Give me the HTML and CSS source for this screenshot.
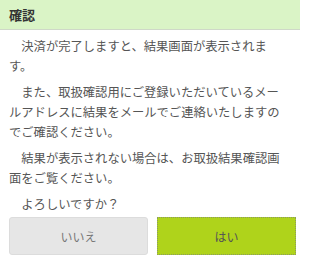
FILE: index.html
```html
<!DOCTYPE html>
<html lang="ja">
<head>
<meta charset="utf-8">
<link rel="stylesheet" href="styles.css">
</head>
<body>
<div class="dialog">
  <div class="dialog-header">確認</div>
  <div class="dialog-body">
    <p class="msg">決済が完了しますと、結果画面が表示されます。</p>
    <p class="msg">また、取扱確認用にご登録いただいているメールアドレスに結果をメールでご連絡いたしますのでご確認ください。</p>
    <p class="msg">結果が表示されない場合は、お取扱結果確認画面をご覧ください。</p>
    <p class="msg last">よろしいですか？</p>
  </div>
  <div class="dialog-actions">
    <button class="btn btn-no">いいえ</button>
    <button class="btn btn-yes">はい</button>
  </div>
</div>
</body>
</html>
```

FILE: styles.css
```css
html, body {
  margin: 0;
  padding: 0;
  background: #ffffff;
}
body {
  font-family: "Noto Sans CJK JP", "Noto Sans", sans-serif;
  color: #555555;
}
.dialog {
  width: 300px;
}
.dialog-header {
  height: 29px;
  line-height: 29px;
  background: #daf4c6;
  border-bottom: 1px solid #cfd8c8;
  padding-left: 9px;
  font-size: 13px;
  font-weight: bold;
  color: #333333;
}
.dialog-body {
  padding: 6px 16px 0 9px;
}
.msg {
  margin: 0 0 6px 0;
  font-size: 12.3px;
  line-height: 20px;
  text-indent: 1em;
}
.msg.last {
  margin-bottom: 0;
}
.dialog-actions {
  display: grid;
  grid-template-columns: 1fr 1fr;
  gap: 9px;
  padding: 3px 4px 0 9px;
}
.btn {
  height: 38px;
  font-family: "Noto Sans CJK JP", "Noto Sans", sans-serif;
  font-size: 12px;
  border-radius: 3px;
  padding: 0;
}
.btn-no {
  background: #e6e6e6;
  border: 1px solid #dcdcdc;
  color: #777777;
}
.btn-yes {
  background: #afd31b;
  border: 1px dotted #8a9a60;
  color: #555555;
  border-radius: 0;
}
```
